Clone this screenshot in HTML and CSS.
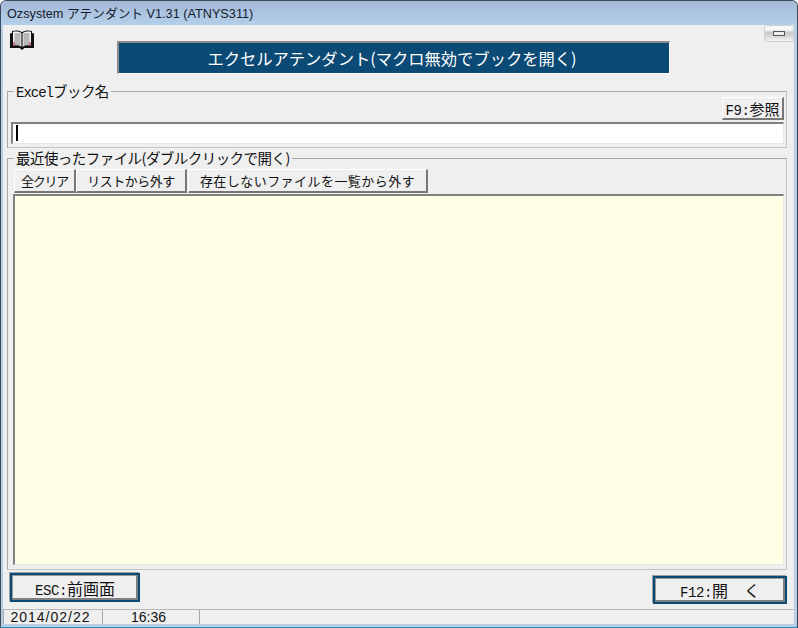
FILE: index.html
```html
<!DOCTYPE html>
<html lang="ja">
<head>
<meta charset="utf-8">
<title>Ozsystem アテンダント</title>
<link rel="stylesheet" href="styles.css">
</head>
<body>
<div class="window">
  <header class="titlebar">Ozsystem アテンダント V1.31 (ATNYS311)</header>
  <main class="client">
    <div class="top">
      <svg class="book" viewBox="0 0 24 20" width="24" height="20" aria-hidden="true">
        <path d="M0 3.500 L2 3 V1 C6 0 9.500 .3 12 2 C14.500 .3 18 0 22 1 V3 L24 3.500 V18 L14.500 18 L12 20 L9.500 18 L0 18 Z" fill="#111"/>
        <path d="M3 1.800 C7 1 9.500 1.400 11.400 3 V16.800 C9.500 15.400 7 15 3 15.600 Z M21 1.800 C17 1 14.500 1.400 12.600 3 V16.800 C14.500 15.400 17 15 21 15.600 Z" fill="#f4f4f4"/>
        <path d="M4.500 4 H10.500 M4.500 6 H10.500 M4.500 8 H10.500 M4.500 10 H10.500 M4.500 12 H10.500 M4.500 14 H10.500 M13.500 4 H19.500 M13.500 6 H19.500 M13.500 8 H19.500 M13.500 10 H19.500 M13.500 12 H19.500 M13.500 14 H19.500" stroke="#6e6e6e" stroke-width=".9" fill="none"/>
        <path d="M4 12 V15 M20 12 V15" stroke="#d2304a" stroke-width="1.200"/>
      </svg>
      <h1 class="banner">エクセルアテンダント(マクロ無効でブックを開く)</h1>
      <button class="mini" aria-label="最小化"><span class="mini-bar"></span></button>
    </div>

    <fieldset class="group group-file">
      <legend><span class="lat lat-tight">Excel</span>ブック名</legend>
      <div class="browse-row"><button class="btn btn-browse"><span class="lat">F9:</span>参照</button></div>
      <div class="input"><span class="caret"></span></div>
    </fieldset>

    <fieldset class="group group-recent">
      <legend>最近使ったファイル(ダブルクリックで開く)</legend>
      <div class="toolbar">
        <button class="btn btn-a">全クリア</button>
        <button class="btn btn-b">リストから外す</button>
        <button class="btn btn-c">存在しないファイルを一覧から外す</button>
      </div>
      <div class="list"></div>
    </fieldset>

    <div class="actions">
      <button class="action action-esc"><span class="lat">ESC:</span>前画面</button>
      <button class="action action-open"><span class="lat">F12:</span>開　く</button>
    </div>

    <footer class="status">
      <div class="cell cell-date">2014/02/22</div>
      <div class="cell cell-time">16:36</div>
      <div class="cell cell-rest"></div>
    </footer>
  </main>
</div>
</body>
</html>
```
FILE: styles.css
```css
* { box-sizing: border-box; }
html, body { margin: 0; padding: 0; background: #fff; }
body { font-family: "Noto Sans CJK JP", "Liberation Sans", sans-serif; color: #111; }
.window {
  width: 798px; height: 628px;
  display: flex; flex-direction: column;
  border: 1px solid #3c4a58;
  border-bottom-color: #2f8fb0;
  border-radius: 6px 6px 0 0;
  background: #b5cfe8;
  padding: 0 3px 3px 2px;
  overflow: hidden;
}
.titlebar {
  height: 24px; flex: none;
  margin: 0 -3px 0 -2px; padding: 4px 0 0 6px;
  font: 12.7px/18px "Liberation Sans", "Noto Sans CJK JP", sans-serif;
  color: #16202c;
  background: linear-gradient(#a3b9d5, #b4cfe9);
}
.client {
  flex: 1; min-height: 0;
  background: #efefef;
  display: flex; flex-direction: column;
  padding: 0;
}
.lat { font-family: "Liberation Mono", monospace; font-size: 14px; letter-spacing: -.4px; }
.lat-tight { letter-spacing: -1px; }
.top { height: 56px; flex: none; display: flex; align-items: flex-start; padding-left: 7px; }
.book { margin-top: 5px; flex: none; }
.banner {
  margin: 16px 0 0 83px; flex: none;
  width: 553px; height: 33px;
  padding-right: 4px;
  background: #0b4a75;
  border-style: solid; border-width: 2px 1px 1px 2px;
  border-color: #8a8a8a #fff #fff #8a8a8a;
  color: #fff;
  font-size: 16.3px; font-weight: 400; line-height: 30px; text-align: center;
}
.mini {
  margin: 0 0 0 94px; padding: 0; flex: none;
  width: 30px; height: 17px;
  border: 1px solid #d0d0d0; border-radius: 3px;
  background: linear-gradient(#f7f7f7 25%, #c9c9c9 45%, #d8d8d8 70%, #f5f5f5);
  display: flex; align-items: center; justify-content: center;
}
.mini-bar { width: 12px; height: 5px; border: 1px solid #555; background: #eee; }
.group {
  margin: 0 0 0 4px; padding: 0; min-width: 0;
  width: 780px; flex: none;
  border: 1px solid #a8a8a8;
  border-right-color: #c4c4c4; border-bottom-color: #c4c4c4;
}
.group legend {
  margin-left: 6px; padding: 0 2px;
  font-size: 14.5px; line-height: 20px; height: 20px;
  letter-spacing: -.55px;
}
.group-file { height: 67px; }
.browse-row { display: flex; justify-content: flex-end; margin: -4px 2px 2px 0; }
.btn {
  font-family: inherit; font-size: 13px; color: #111;
  height: 24px; padding: 0;
  background: #efefef;
  border-style: solid; border-width: 1px 2px 2px 1px;
  border-color: #fff #777 #777 #fff;
}
.btn-browse { width: 62px; height: 23px; font-size: 15px; }
.input {
  height: 22px; margin: 0 2px 0 3px;
  background: #fff;
  border-style: solid; border-width: 2px 1px 1px 2px;
  border-color: #808080 #e8e8e8 #e8e8e8 #808080;
  padding: 1px 0 0 3px;
}
.caret { display: block; width: 2px; height: 16px; background: #000; }
.group-recent { height: 422px; }
.toolbar { display: flex; margin: 1px 0 1px 6px; gap: 0; }
.btn-a { width: 62px; letter-spacing: -1.2px; }
.btn-b { width: 111px; margin-right: 1px; letter-spacing: -.5px; }
.btn-c { width: 240px; letter-spacing: .45px; }
.list {
  height: 371px; margin: 0 2px 0 5px;
  background: #ffffe6;
  border-style: solid; border-width: 2px 1px 1px 2px;
  border-color: #808080 #e8e8e8 #e8e8e8 #808080;
}
.actions { display: flex; justify-content: space-between; align-items: flex-start; margin-top: 3px; padding: 0 7px 0 7px; flex: none; }
.action {
  font-family: inherit; font-size: 16px; color: #111; padding: 0;
  background: #efefef;
  border: 2px solid #0b4a75;
  box-shadow: inset -2px -2px 0 #808080, inset 1px 1px 0 #9a9a9a, -1px -1px 0 #a0a0a0;
}
.action-esc { width: 130px; height: 29px; }
.action-open { width: 134px; height: 28px; margin-top: 3px; }
.status {
  margin-top: 5px; flex: 1; min-height: 0;
  display: flex; gap: 3px; padding-left: 0;
  border-top: 1px solid #b8b8b8;
}
.cell {
  height: 100%;
  border-left: 1px solid #a8a8a8;
  font: 14px/15px "Liberation Sans", sans-serif;
  text-align: center;
}
.cell-date { width: 96px; letter-spacing: 1px; padding-right: 2px; }
.cell-time { width: 94px; padding-right: 2px; }
.cell-rest { flex: 1; }
```
